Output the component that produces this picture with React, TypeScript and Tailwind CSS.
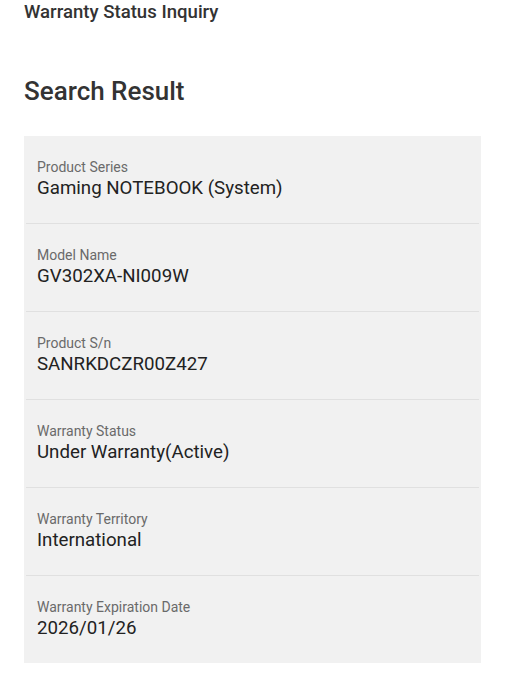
const rows = [
  { label: 'Product Series', value: 'Gaming NOTEBOOK (System)' },
  { label: 'Model Name', value: 'GV302XA-NI009W' },
  { label: 'Product S/n', value: 'SANRKDCZR00Z427' },
  { label: 'Warranty Status', value: 'Under Warranty(Active)' },
  { label: 'Warranty Territory', value: 'International' },
  { label: 'Warranty Expiration Date', value: '2026/01/26' },
];

export default function App() {
  return (
    <div className="min-h-[700px] bg-white font-['Roboto',sans-serif] text-[#333]">
      <div className="px-6">
        <h2 className="text-[18.6px] leading-[22px] font-medium text-[#333] mt-[1px]">Warranty Status Inquiry</h2>
        <h1 className="mt-[53px] text-[26px] leading-[30px] font-medium text-[#333]">Search Result</h1>
        <div className="mt-[30px] w-[457px] bg-[#f1f1f1]">
          {rows.map((r, i) => (
            <div key={r.label}>
              {i > 0 && <div className="mx-[2px] h-px bg-[#e0e0e0]" />}
              <div className="h-[87px] px-[13px] pt-[22px]">
                <div className="text-[14px] leading-[18px] text-[#6a6a6a]">{r.label}</div>
                <div className="mt-[1px] text-[18.7px] leading-[22px] text-[#222]">{r.value}</div>
              </div>
            </div>
          ))}
        </div>
      </div>
    </div>
  );
}
